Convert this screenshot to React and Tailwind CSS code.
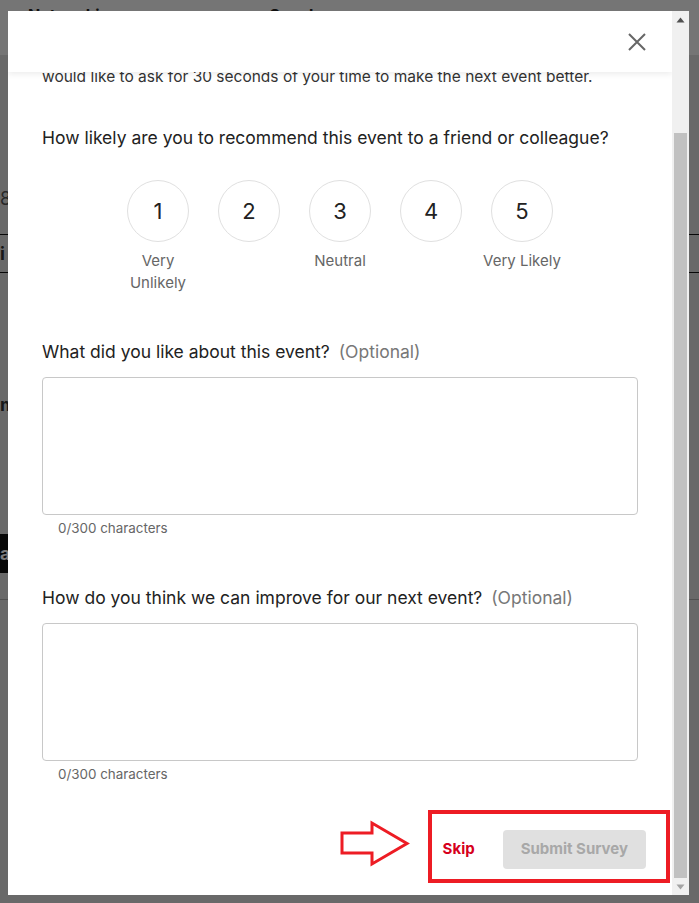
import React from "react";

const ratings = [
  { value: 1, label: "Very Unlikely" },
  { value: 2, label: "" },
  { value: 3, label: "Neutral" },
  { value: 4, label: "" },
  { value: 5, label: "Very Likely" },
];

const Field = ({ question }) => (
  <div>
    <div className="text-[17.5px] leading-[24px] text-[#222]">
      {question} <span className="ml-[4px] text-[#777]">(Optional)</span>
    </div>
    <textarea className="mt-[13px] block h-[138px] w-full resize-none rounded-[4px] border border-[#c8c8c8] bg-white outline-none" />
    <div className="mt-[4px] pl-[16px] text-[13.4px] leading-[18px] text-[#666]">
      0/300 characters
    </div>
  </div>
);

const Scrollbar = () => (
  <div className="flex w-[17px] flex-col bg-[#f0f0f0]">
    <div className="flex h-[17px] items-center justify-center">
      <svg width="9" height="6" viewBox="0 0 9 6">
        <path d="M0.5 5.5 L4.5 0.5 L8.5 5.5 Z" fill="#505050" />
      </svg>
    </div>
    <div className="flex flex-1 flex-col justify-end px-[2px]">
      <div className="h-[745px] bg-[#c1c1c1]" />
    </div>
    <div className="flex h-[17px] items-center justify-center">
      <svg width="9" height="6" viewBox="0 0 9 6">
        <path d="M0.5 0.5 L4.5 5.5 L8.5 0.5 Z" fill="#a3a3a3" />
      </svg>
    </div>
  </div>
);

const Page = () => (
  <div className="flex h-full w-full flex-col bg-[#dcdcdc]">
    <div className="flex h-[55px] gap-[150px] bg-[#f4f4f4] pl-[28px] pt-[5px] text-[16px] leading-[20px] font-bold text-[#222]">
      <span>Networking</span>
      <span>Speakers</span>
    </div>
    <div className="flex flex-col pt-[130px] text-[18px] text-[#333]">
      <div className="text-[#555]">8</div>
      <div className="mt-[22px] border-y border-[#111] py-[5px] font-bold">i</div>
      <div className="mt-[118px] font-bold">m</div>
      <div className="mt-[116px] flex h-[39px] w-[40px] items-center bg-[#111] font-bold text-white">a</div>
      <div className="mt-[26px] border-t border-[#aaa]" />
    </div>
  </div>
);

export default function App() {
  return (
    <div
      className="relative h-[903px] w-[699px] overflow-hidden"
      style={{ fontFamily: "Inter, 'Noto Sans', sans-serif" }}
    >
      <Page />
      <div className="absolute inset-0 bg-black/[0.52]" />

      <div className="absolute left-[8px] top-[11px] flex h-[884px] w-[681px] bg-white">
        <div className="flex flex-1 flex-col overflow-hidden">
          <div className="relative z-10 flex h-[61px] shrink-0 items-center justify-end bg-white pr-[26px] shadow-[0_2px_6px_rgba(0,0,0,0.08)]">
            <svg width="18" height="18" viewBox="0 0 18 18">
              <path d="M1 1 L17 17 M17 1 L1 17" stroke="#666" strokeWidth="2" />
            </svg>
          </div>

          <div className="flex flex-1 flex-col overflow-hidden px-[34px]">
            <p className="-mt-[6px] whitespace-nowrap text-[15.5px] leading-[22px] text-[#333]">
              would like to ask for 30 seconds of your time to make the next event better.
            </p>

            <div className="mt-[38px] text-[17.5px] leading-[24px] text-[#222]">
              How likely are you to recommend this event to a friend or colleague?
            </div>

            <div className="mt-[30px] flex justify-center gap-[9px]">
              {ratings.map((r) => (
                <div key={r.value} className="flex w-[82px] flex-col items-center">
                  <button className="flex h-[62px] w-[62px] items-center justify-center rounded-full border border-[#e0e0e0] bg-white text-[22px] text-[#222]">
                    {r.value}
                  </button>
                  <div className="mt-[8px] text-center text-[15px] leading-[22px] text-[#666]">
                    {r.label}
                  </div>
                </div>
              ))}
            </div>

            <div className="mt-[46px]">
              <Field question="What did you like about this event?" />
            </div>
            <div className="mt-[49px]">
              <Field question="How do you think we can improve for our next event?" />
            </div>

            <div className="-mr-[8px] mt-[47px] flex items-center justify-end gap-[28px]">
              <button className="text-[15px] font-bold text-[#d6001c]">Skip</button>
              <button className="h-[39px] rounded-[4px] bg-[#e0e0e0] px-[18px] text-[15px] font-bold text-[#a8a8a8]">
                Submit Survey
              </button>
            </div>
          </div>
        </div>
        <Scrollbar />
      </div>

      <div className="absolute left-[428px] top-[810px] h-[73px] w-[242px] border-[4px] border-[#ed1c24]" />
      <svg
        className="absolute left-[338px] top-[820px]"
        width="74"
        height="48"
        viewBox="0 0 74 48"
      >
        <path
          d="M4 13 L34 13 L34 3 L69 23.5 L34 44 L34 33 L4 33 Z"
          fill="none"
          stroke="#ed1c24"
          strokeWidth="3"
          strokeLinejoin="miter"
        />
      </svg>
    </div>
  );
}
